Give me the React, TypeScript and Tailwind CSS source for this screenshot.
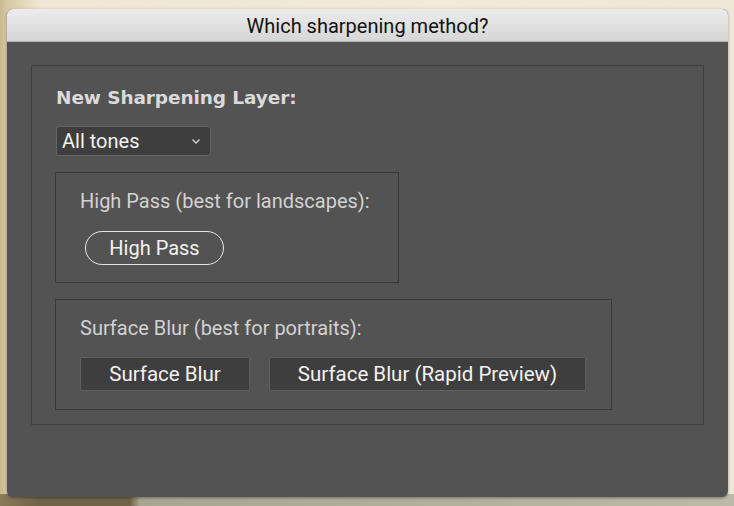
import React from "react";

export default function App() {
  return (
    <div
      className="relative w-[734px] h-[506px] overflow-hidden pt-[9px] pl-[7px]"
      style={{
        background:
          "linear-gradient(90deg, #c9b88f 0px, #d8c9a4 7px, #efe7d4 40px, #f1ead9 60%, #eee8d8 100%)",
      }}
    >
      <div className="absolute left-0 right-0 bottom-0 h-[12px] bg-[linear-gradient(90deg,#8a7a58_0px,#6f6347_40px,#6f6347_130px,#a9a593_140px,#bdb9a8_100%)]" />
      <div className="relative w-[721px] h-[488px] rounded-[6px] overflow-hidden flex flex-col bg-[#535353] shadow-[0_1px_3px_rgba(0,0,0,0.35)]">
        <div className="h-[33px] shrink-0 flex items-center justify-center bg-[linear-gradient(180deg,#ececec,#d6d6d6)] border-b border-[#b4b4b4] text-[20px] text-[#111] font-['Roboto',sans-serif] pt-[1px]">
          Which sharpening method?
        </div>
        <div className="px-[24px] pt-[23px]">
          <div className="h-[360px] border border-[#3f3f3f] pl-[23px] pt-[20px]">
            <div className="font-['DejaVu_Sans',sans-serif] font-bold text-[18.5px] text-[#dadada] leading-[24px] ml-[1px] tracking-[-0.1px]">
              New Sharpening Layer:
            </div>
            <div className="mt-[16px] ml-[1px] w-[155px] h-[30px] rounded-[3px] border border-[#656565] bg-[#3e3e3e] flex items-center justify-between pl-[5px] pr-[9px] font-['Roboto',sans-serif] text-[20px] text-[#f2f2f2]">
              <span>All tones</span>
              <svg width="10" height="7" viewBox="0 0 10 7" className="mt-[1px]">
                <path d="M1.5 1.5 L5 5 L8.5 1.5" fill="none" stroke="#d0d0d0" strokeWidth="1.4" />
              </svg>
            </div>
            <div className="mt-[16px] w-[344px] h-[111px] border border-[#3a3a3a] pl-[24px] pt-[15px] font-['Roboto',sans-serif]">
              <div className="text-[20px] text-[#d2d2d2] leading-[26px]">High Pass (best for landscapes):</div>
              <div className="mt-[17px] ml-[5px] w-[139px] h-[34px] rounded-full border-[1.5px] border-[#e6e6e6] flex items-center justify-center text-[20px] text-[#f2f2f2]">
                High Pass
              </div>
            </div>
            <div className="mt-[16px] w-[557px] h-[111px] border border-[#3a3a3a] pl-[24px] pt-[15px] font-['Roboto',sans-serif]">
              <div className="text-[20px] text-[#d2d2d2] leading-[26px]">Surface Blur (best for portraits):</div>
              <div className="mt-[16px] flex gap-[19px]">
                <div className="w-[170px] h-[34px] rounded-[2px] border border-[#5f5f5f] bg-[#3e3e3e] flex items-center justify-center text-[20.5px] text-[#f2f2f2]">
                  Surface Blur
                </div>
                <div className="w-[317px] h-[34px] rounded-[2px] border border-[#5f5f5f] bg-[#3e3e3e] flex items-center justify-center text-[20.5px] text-[#f2f2f2]">
                  Surface Blur (Rapid Preview)
                </div>
              </div>
            </div>
          </div>
        </div>
      </div>
    </div>
  );
}
